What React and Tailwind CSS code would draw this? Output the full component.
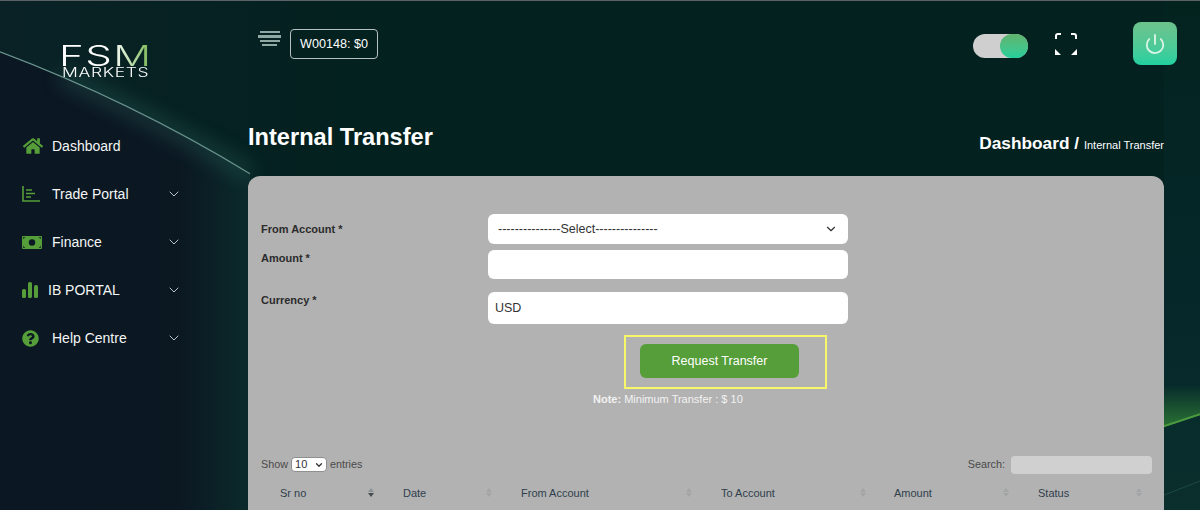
import React from 'react';
import { ChevronDown, Power } from 'lucide-react';
import { FaHome, FaQuestionCircle } from 'react-icons/fa';

function ChartLineIcon() {
  return (
    <svg viewBox="0 0 18 16" className="w-[18px] h-4" fill="none" stroke="#559e39" strokeWidth="1.6">
      <path d="M1 0v15h17" />
      <path d="M4 4h6M4 7.5h9M4 11h5" />
    </svg>
  );
}

function BillIcon() {
  return (
    <svg viewBox="0 0 20 13" className="w-5 h-[13px]">
      <rect width="20" height="13" rx="1" fill="#559e39" />
      <circle cx="10" cy="6.5" r="3.2" fill="#0b1a22" />
      <path d="M1 1h2.5L1 3.5zM19 1h-2.5L19 3.5zM1 12h2.5L1 9.5zM19 12h-2.5L19 9.5z" fill="#0b1a22" opacity="0.7" />
    </svg>
  );
}

function BarsIcon() {
  return (
    <svg viewBox="0 0 16 16" className="w-4 h-4" fill="#559e39">
      <rect x="0" y="7" width="4" height="9" rx="1.6" />
      <rect x="6" y="0" width="4" height="16" rx="1.6" />
      <rect x="12" y="3" width="4" height="13" rx="1.6" />
    </svg>
  );
}

function FullscreenIcon() {
  return (
    <svg viewBox="0 0 22 22" className="w-[22px] h-[22px]" fill="none" stroke="white" strokeWidth="2">
      <path d="M1 6V3a2 2 0 0 1 2-2h3" />
      <path d="M16 1h3a2 2 0 0 1 2 2v3" />
      <path d="M0 16l6 6H0z" fill="white" stroke="none" />
      <path d="M22 16l-6 6h6z" fill="white" stroke="none" />
    </svg>
  );
}

function NavItem({ icon, label, chevron = true, tight = false }) {
  return (
    <a className="h-12 flex items-center text-[#f4f6f6] text-sm">
      <span className="w-[30px] flex justify-start items-center shrink-0">{icon}</span>
      <span className={tight ? '-ml-1' : ''}>{label}</span>
      {chevron && <ChevronDown className="w-4 h-4 ml-auto text-[#c8cdd0]" strokeWidth={1.4} />}
    </a>
  );
}

function SortArrows({ active = false }) {
  return (
    <span className="flex flex-col items-center gap-px">
      <span className={`w-0 h-0 border-x-[3px] border-x-transparent border-b-[4px] ${active ? 'border-b-[#8d9296]' : 'border-b-[#a2a4a6]'}`} />
      <span className={`w-0 h-0 border-x-[3px] border-x-transparent border-t-[4px] ${active ? 'border-t-[#474c50]' : 'border-t-[#a2a4a6]'}`} />
    </span>
  );
}

export default function App() {
  const columns = [
    { label: 'Sr no', width: 'w-[123px] pr-[17px]', active: true },
    { label: 'Date', width: 'w-[118px] pr-[17px]' },
    { label: 'From Account', width: 'w-[200px] pr-[17px]' },
    { label: 'To Account', width: 'w-[173px] pr-[16px]' },
    { label: 'Amount', width: 'w-[144px] pr-[17px]' },
    { label: 'Status', width: 'w-[125px] pr-[9px]' },
  ];

  return (
    <div className="relative w-[1200px] h-[510px] overflow-hidden flex bg-[#03211f] border-t border-[#5a6266] font-['Liberation_Sans',Arial,sans-serif]">
      {/* Background waves */}
      <svg className="absolute inset-0 w-full h-full" viewBox="0 0 1200 510" preserveAspectRatio="none">
        <defs>
          <linearGradient id="top" x1="0" y1="0" x2="1" y2="0">
            <stop offset="0" stopColor="#0a2226" />
            <stop offset="0.3" stopColor="#03211f" />
            <stop offset="1" stopColor="#03211f" />
          </linearGradient>
          <linearGradient id="under" x1="0" y1="0" x2="1" y2="0">
            <stop offset="0" stopColor="#0b1722" />
            <stop offset="0.72" stopColor="#0b1822" />
            <stop offset="1" stopColor="#0b2a2b" />
          </linearGradient>
          <linearGradient id="edge" x1="0" y1="0" x2="0" y2="1">
            <stop offset="0" stopColor="#03231f" />
            <stop offset="0.65" stopColor="#06282b" />
            <stop offset="1" stopColor="#0b2f2d" />
          </linearGradient>
          <linearGradient id="streakGlow" x1="0" y1="0" x2="0" y2="1">
            <stop offset="0" stopColor="#2d7a35" stopOpacity="0" />
            <stop offset="1" stopColor="#2d7a35" stopOpacity="0.9" />
          </linearGradient>
          <filter id="haze" x="-20%" y="-50%" width="140%" height="200%">
            <feGaussianBlur stdDeviation="9" />
          </filter>
        </defs>
        <rect width="1200" height="510" fill="url(#top)" />
        <path d="M0 51Q130 100 250 173V510H0Z" fill="url(#under)" />
        <path d="M60 75Q150 115 250 173" fill="none" stroke="#2f6a62" strokeWidth="16" opacity="0.35" filter="url(#haze)" />
        <path d="M0 51Q130 100 250 173" fill="none" stroke="#6a948d" strokeWidth="1.2" />
        <rect x="1164" y="0" width="36" height="510" fill="url(#edge)" />
        <path d="M1164 385H1200V415L1164 427Z" fill="url(#streakGlow)" />
        <path d="M1164 426L1200 414" fill="none" stroke="#4c9a3e" strokeWidth="2" />
        <path d="M1164 495L1200 481" fill="none" stroke="#1d4a44" strokeWidth="1" />
      </svg>

      {/* Sidebar */}
      <aside className="relative w-[248px] shrink-0 pl-[22px] pr-[66px] flex flex-col">
        <div className="h-[121px] pt-[40px] pl-[37px] leading-none whitespace-nowrap font-['Inter']">
          <div className="text-[29px] h-[25px] font-light text-white tracking-[1px] origin-left scale-x-[1.45]">
            <span>FS</span>
            <span className="bg-gradient-to-r from-white to-[#6fb23f] bg-clip-text text-transparent">M</span>
          </div>
          <div className="ml-[3px] text-[13.5px] font-light text-white tracking-[0.5px] origin-left scale-x-[1.3]">MARKETS</div>
        </div>
        <nav className="flex flex-col">
          <NavItem icon={<FaHome className="w-5 h-5 ml-px text-[#559e39]" />} label="Dashboard" chevron={false} />
          <NavItem icon={<ChartLineIcon />} label="Trade Portal" />
          <NavItem icon={<BillIcon />} label="Finance" />
          <NavItem icon={<BarsIcon />} label="IB PORTAL" tight />
          <NavItem icon={<FaQuestionCircle className="w-[17px] h-[17px] text-[#559e39]" />} label="Help Centre" />
        </nav>
      </aside>

      {/* Main */}
      <main className="relative flex-1 pr-[36px] flex flex-col">
        <header className="h-[64px] flex items-start">
          <button className="mt-[30px] ml-[10px] w-[23px] flex flex-col items-center gap-[2px]">
            <span className="block h-[2px] w-[20px] bg-[#8fa8a4]" />
            <span className="block h-[3px] w-[23px] bg-[#8fa8a4]" />
            <span className="block h-[2px] w-[20px] bg-[#8fa8a4]" />
            <span className="block h-[2px] w-[15px] bg-[#8fa8a4]" />
          </button>
          <div className="mt-[28px] ml-[9px] h-[30px] w-[88px] border border-[#b5c0c0] rounded text-white text-[12.6px] flex items-center justify-center">
            W00148: $0
          </div>
          <div className="ml-auto mt-[33px] w-[55px] h-6 rounded-full bg-[#cfcfcf] flex justify-end">
            <span className="w-7 h-6 rounded-full bg-gradient-to-b from-[#5fb36d] to-[#1fcf9b]" />
          </div>
          <span className="mt-[32px] ml-[27px]">
            <FullscreenIcon />
          </span>
          <button className="mt-[21px] ml-[56px] -mr-[13px] w-[44px] h-[43px] rounded-lg bg-gradient-to-b from-[#6cc28c] to-[#1fd0a0] flex items-center justify-center">
            <Power className="w-[22px] h-[22px] text-[#d9f5e8]" strokeWidth={2} />
          </button>
        </header>

        <div className="h-[111px] pt-[35px] flex items-center justify-between text-white">
          <h1 className="text-[23.6px] font-bold">Internal Transfer</h1>
          <div className="font-bold text-[17.3px] leading-none mt-[11px]">
            Dashboard / <span className="font-normal text-[11px]">Internal Transfer</span>
          </div>
        </div>

        {/* Card */}
        <section className="flex-1 bg-[#b2b2b2] rounded-t-xl pl-[13px] pr-[12px] pt-[38px]">
          <div className="flex flex-col">
            <div className="flex h-[30px]">
              <label className="w-[227px] pt-[7px] text-[11px] leading-[16px] font-bold text-[#2b2b2b]">From Account *</label>
              <div className="w-[360px] h-[30px] bg-white rounded-md flex items-center pl-[10px] pr-[10px] text-[12.5px] text-[#333]">
                ---------------Select---------------
                <ChevronDown className="w-3.5 h-3.5 ml-auto" strokeWidth={2} />
              </div>
            </div>
            <div className="flex h-[29px] mt-[6px]">
              <label className="w-[227px] text-[11px] leading-[16px] font-bold text-[#2b2b2b]">Amount *</label>
              <input className="w-[360px] h-[29px] bg-white rounded-md" />
            </div>
            <div className="flex h-[32px] mt-[13px]">
              <label className="w-[227px] text-[11px] leading-[16px] font-bold text-[#2b2b2b]">Currency *</label>
              <div className="w-[360px] h-[32px] bg-white rounded-md flex items-center pl-[7px] text-[12.5px] text-[#333]">USD</div>
            </div>
          </div>

          <div className="ml-[363px] mt-[11px] w-[203px] h-[54px] border-2 border-[#f7f76a] flex items-center justify-center">
            <button className="w-[159px] h-[34px] mt-[-2px] mr-[12px] bg-[#559e39] rounded-md text-white text-[12.5px]">Request Transfer</button>
          </div>
          <p className="ml-[332px] mt-[2px] text-[11px] text-[#f2f2f2]">
            <b>Note:</b> Minimum Transfer : $ 10
          </p>

          <div className="mt-[48px] h-[18px] flex items-center text-[10.8px] text-[#4a4a4a]">
            <span>Show</span>
            <span className="mx-[3px] w-[36px] h-[15px] bg-white border border-[#8f8f8f] rounded-sm flex items-center pl-[3px] text-[#333] text-[11px]">
              10
              <ChevronDown className="w-2.5 h-2.5 ml-auto mr-[2px]" strokeWidth={3} />
            </span>
            <span>entries</span>
            <span className="ml-auto mr-[6px]">Search:</span>
            <span className="w-[141px] h-[18px] bg-[#d0d0d0] rounded" />
          </div>

          <div className="ml-[7px] mt-[11px] flex text-[11px] text-[#2f3f4c]">
            {columns.map((col) => (
              <div key={col.label} className={`${col.width} shrink-0 pl-[12px] flex items-center justify-between`}>
                <span>{col.label}</span>
                <SortArrows active={col.active} />
              </div>
            ))}
          </div>
        </section>
      </main>
    </div>
  );
}
